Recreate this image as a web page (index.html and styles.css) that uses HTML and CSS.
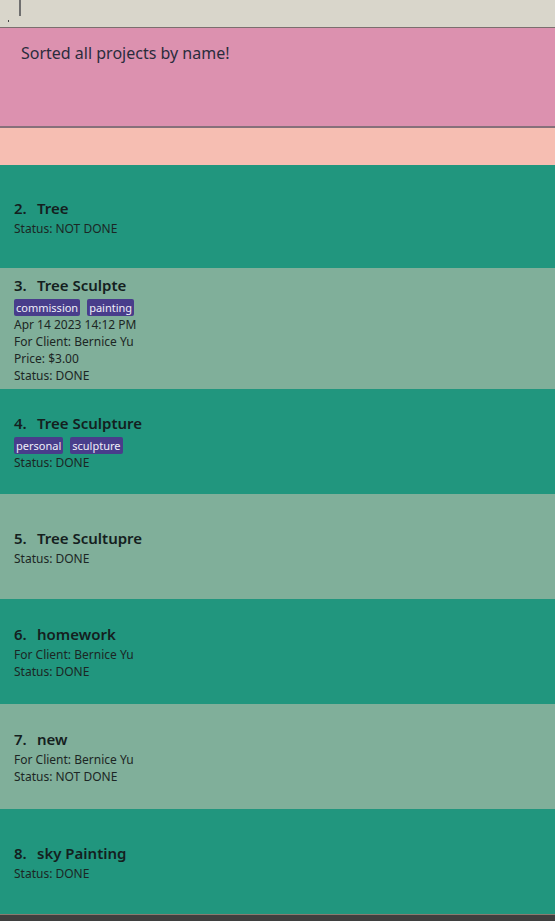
FILE: index.html
```html
<!DOCTYPE html>
<html>
<head>
<meta charset="utf-8">
<link rel="stylesheet" href="styles.css">
</head>
<body>
<div class="app">
  <div class="command">
    <span class="caret"></span>
    <span class="dot"></span>
  </div>
  <div class="result">Sorted all projects by name!</div>
  <div class="spacer"></div>
  <div class="list">
    <div class="card dark first">
      <div class="title"><span class="idx">2.</span><span>Tree</span></div>
      <div class="line">Status: NOT DONE</div>
    </div>
    <div class="card light tall">
      <div class="title"><span class="idx">3.</span><span>Tree Sculpte</span></div>
      <div class="tags"><span class="tag">commission</span><span class="tag">painting</span></div>
      <div class="line">Apr 14 2023 14:12 PM</div>
      <div class="line">For Client: Bernice Yu</div>
      <div class="line">Price: $3.00</div>
      <div class="line">Status: DONE</div>
    </div>
    <div class="card dark">
      <div class="title"><span class="idx">4.</span><span>Tree Sculpture</span></div>
      <div class="tags"><span class="tag">personal</span><span class="tag">sculpture</span></div>
      <div class="line">Status: DONE</div>
    </div>
    <div class="card light">
      <div class="title"><span class="idx">5.</span><span>Tree Scultupre</span></div>
      <div class="line">Status: DONE</div>
    </div>
    <div class="card dark">
      <div class="title"><span class="idx">6.</span><span>homework</span></div>
      <div class="line">For Client: Bernice Yu</div>
      <div class="line">Status: DONE</div>
    </div>
    <div class="card light">
      <div class="title"><span class="idx">7.</span><span>new</span></div>
      <div class="line">For Client: Bernice Yu</div>
      <div class="line">Status: NOT DONE</div>
    </div>
    <div class="card dark">
      <div class="title"><span class="idx">8.</span><span>sky Painting</span></div>
      <div class="line">Status: DONE</div>
    </div>
  </div>
  <div class="footer"></div>
</div>
</body>
</html>
```
FILE: styles.css
```css
html, body {
  margin: 0;
  padding: 0;
}
body {
  font-family: "Noto Sans", "Open Sans", sans-serif;
  color: #1c2624;
  background: #3f3f3f;
  overflow: hidden;
}
.app {
  width: 555px;
  height: 921px;
  display: flex;
  flex-direction: column;
}
.command {
  position: relative;
  height: 27px;
  background: #d9d6cb;
  border-bottom: 1px solid #7c6e6e;
  flex: none;
}
.caret {
  position: absolute;
  left: 19px;
  top: 0;
  width: 2px;
  height: 16px;
  background: #6f6f6f;
}
.dot {
  position: absolute;
  left: 8px;
  top: 20px;
  width: 1px;
  height: 2px;
  background: #444;
}
.result {
  background: #dc91af;
  border-bottom: 2px solid #86707a;
  padding: 14px 0 0 21px;
  box-sizing: border-box;
  height: 100px;
  font-size: 16px;
  color: #2a2c3c;
  flex: none;
}
.spacer {
  height: 37px;
  background: #f6beb2;
  flex: none;
}
.list {
  display: flex;
  flex-direction: column;
  flex: none;
}
.card {
  min-height: 105px;
  box-sizing: border-box;
  padding: 5px 14px;
  display: flex;
  flex-direction: column;
  justify-content: center;
}
.card.first {
  min-height: 103px;
}
.card.tall {
  min-height: 121px;
}
.dark {
  background: #21967e;
}
.light {
  background: #80af9a;
}
.title {
  font-size: 15px;
  font-weight: 600;
  line-height: 23px;
  display: flex;
  color: #14201e;
}
.idx {
  width: 23px;
}
.line {
  font-size: 12px;
  line-height: 17px;
}
.tags {
  display: flex;
  gap: 7px;
  margin: 2px 0 0;
}
.tag {
  background: #483d8b;
  color: #f0eef8;
  font-size: 11px;
  line-height: 17px;
  padding: 0 2px;
  border-radius: 2px;
}
.footer {
  flex: 1;
  border-top: 1px solid #8a7a70;
  background: #3f3f3f;
}
```
